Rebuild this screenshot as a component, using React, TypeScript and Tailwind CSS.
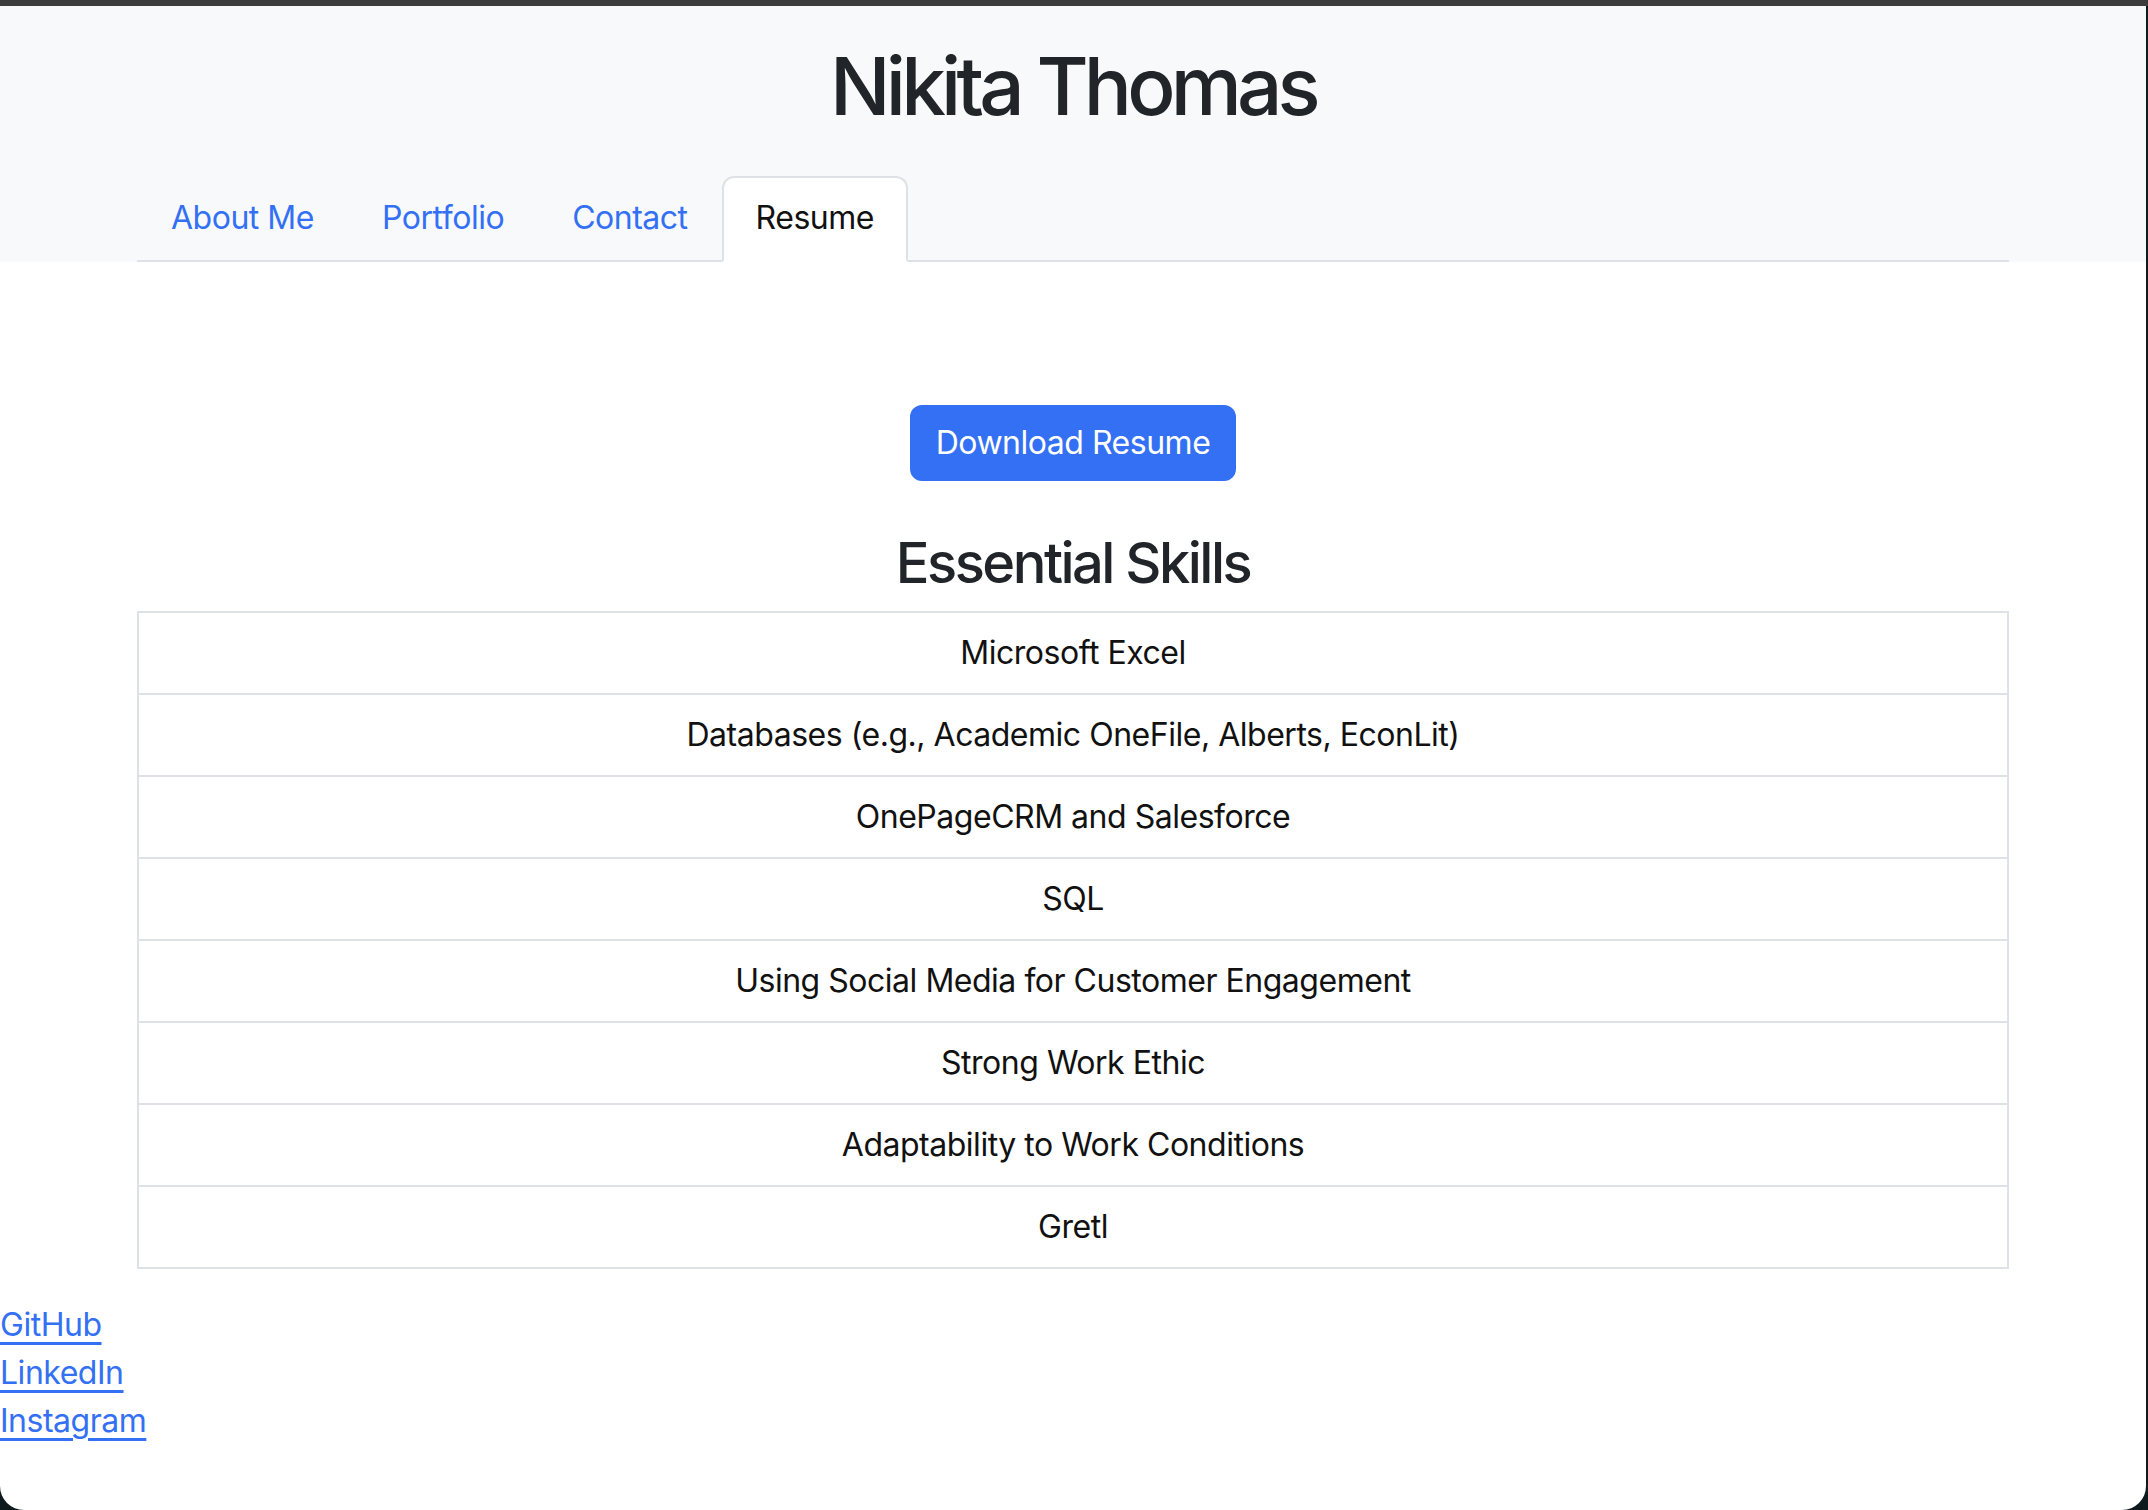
import React from 'react';

const skills = [
  'Microsoft Excel',
  'Databases (e.g., Academic OneFile, Alberts, EconLit)',
  'OnePageCRM and Salesforce',
  'SQL',
  'Using Social Media for Customer Engagement',
  'Strong Work Ethic',
  'Adaptability to Work Conditions',
  'Gretl',
];

const tabs = ['About Me', 'Portfolio', 'Contact', 'Resume'];

export default function App() {
  const active = 'Resume';

  return (
    <div className="w-[2148px] h-[1510px] bg-[#0f1a1f] flex flex-col overflow-hidden font-['Inter','Noto_Sans',sans-serif] tracking-[-0.03em]">
      {/* window top edge */}
      <div className="h-[6px] bg-[#3c3c3c]" />

      <div className="flex-1 w-[2146px] bg-white rounded-b-[24px] overflow-hidden flex flex-col">
        {/* Header */}
        <header className="bg-[#f8f9fa]">
          <div className="w-[1920px] mx-auto px-[24px]">
            <h1 className="pt-[32px] text-center text-[80px] font-medium leading-[96px] tracking-[-0.06em] text-[#212529]">
              Nikita Thomas
            </h1>
            <nav className="mt-[42px] flex border-b-2 border-[#dee2e6]">
              {tabs.map((tab) => (
                <a
                  key={tab}
                  href="#"
                  className={
                    tab === active
                      ? '-mb-[2px] px-[32px] py-[16px] text-[32px] leading-[48px] text-[#111] bg-white border-2 border-[#dee2e6] border-b-white rounded-t-[12px]'
                      : 'px-[32px] py-[16px] text-[32px] leading-[48px] text-[#3370f4] border-2 border-transparent'
                  }
                >
                  {tab}
                </a>
              ))}
            </nav>
          </div>
        </header>

        {/* Resume tab content */}
        <main className="w-[1920px] mx-auto px-[24px] flex flex-col items-center">
          <button className="mt-[143px] px-[24px] py-[12px] text-[32px] leading-[48px] text-white bg-[#3370f4] border-2 border-[#3370f4] rounded-[12px]">
            Download Resume
          </button>
          <h3 className="mt-[49px] mb-[14px] text-[56px] leading-[67px] font-medium tracking-[-0.045em] text-[#212529]">
            Essential Skills
          </h3>
          <ul className="w-full border-2 border-[#dee2e6]">
            {skills.map((skill, i) => (
              <li
                key={skill}
                className={
                  'px-[32px] py-[16px] text-center text-[32px] leading-[48px] text-[#111]' +
                  (i > 0 ? ' border-t-2 border-[#dee2e6]' : '')
                }
              >
                {skill}
              </li>
            ))}
          </ul>
        </main>

        {/* Footer links */}
        <footer className="mt-[32px] flex flex-col items-start text-[32px] leading-[48px]">
          <a href="#" className="text-[#3370f4] underline underline-offset-[6px]">GitHub</a>
          <a href="#" className="text-[#3370f4] underline underline-offset-[6px]">LinkedIn</a>
          <a href="#" className="text-[#3370f4] underline underline-offset-[6px]">Instagram</a>
        </footer>
      </div>
    </div>
  );
}
